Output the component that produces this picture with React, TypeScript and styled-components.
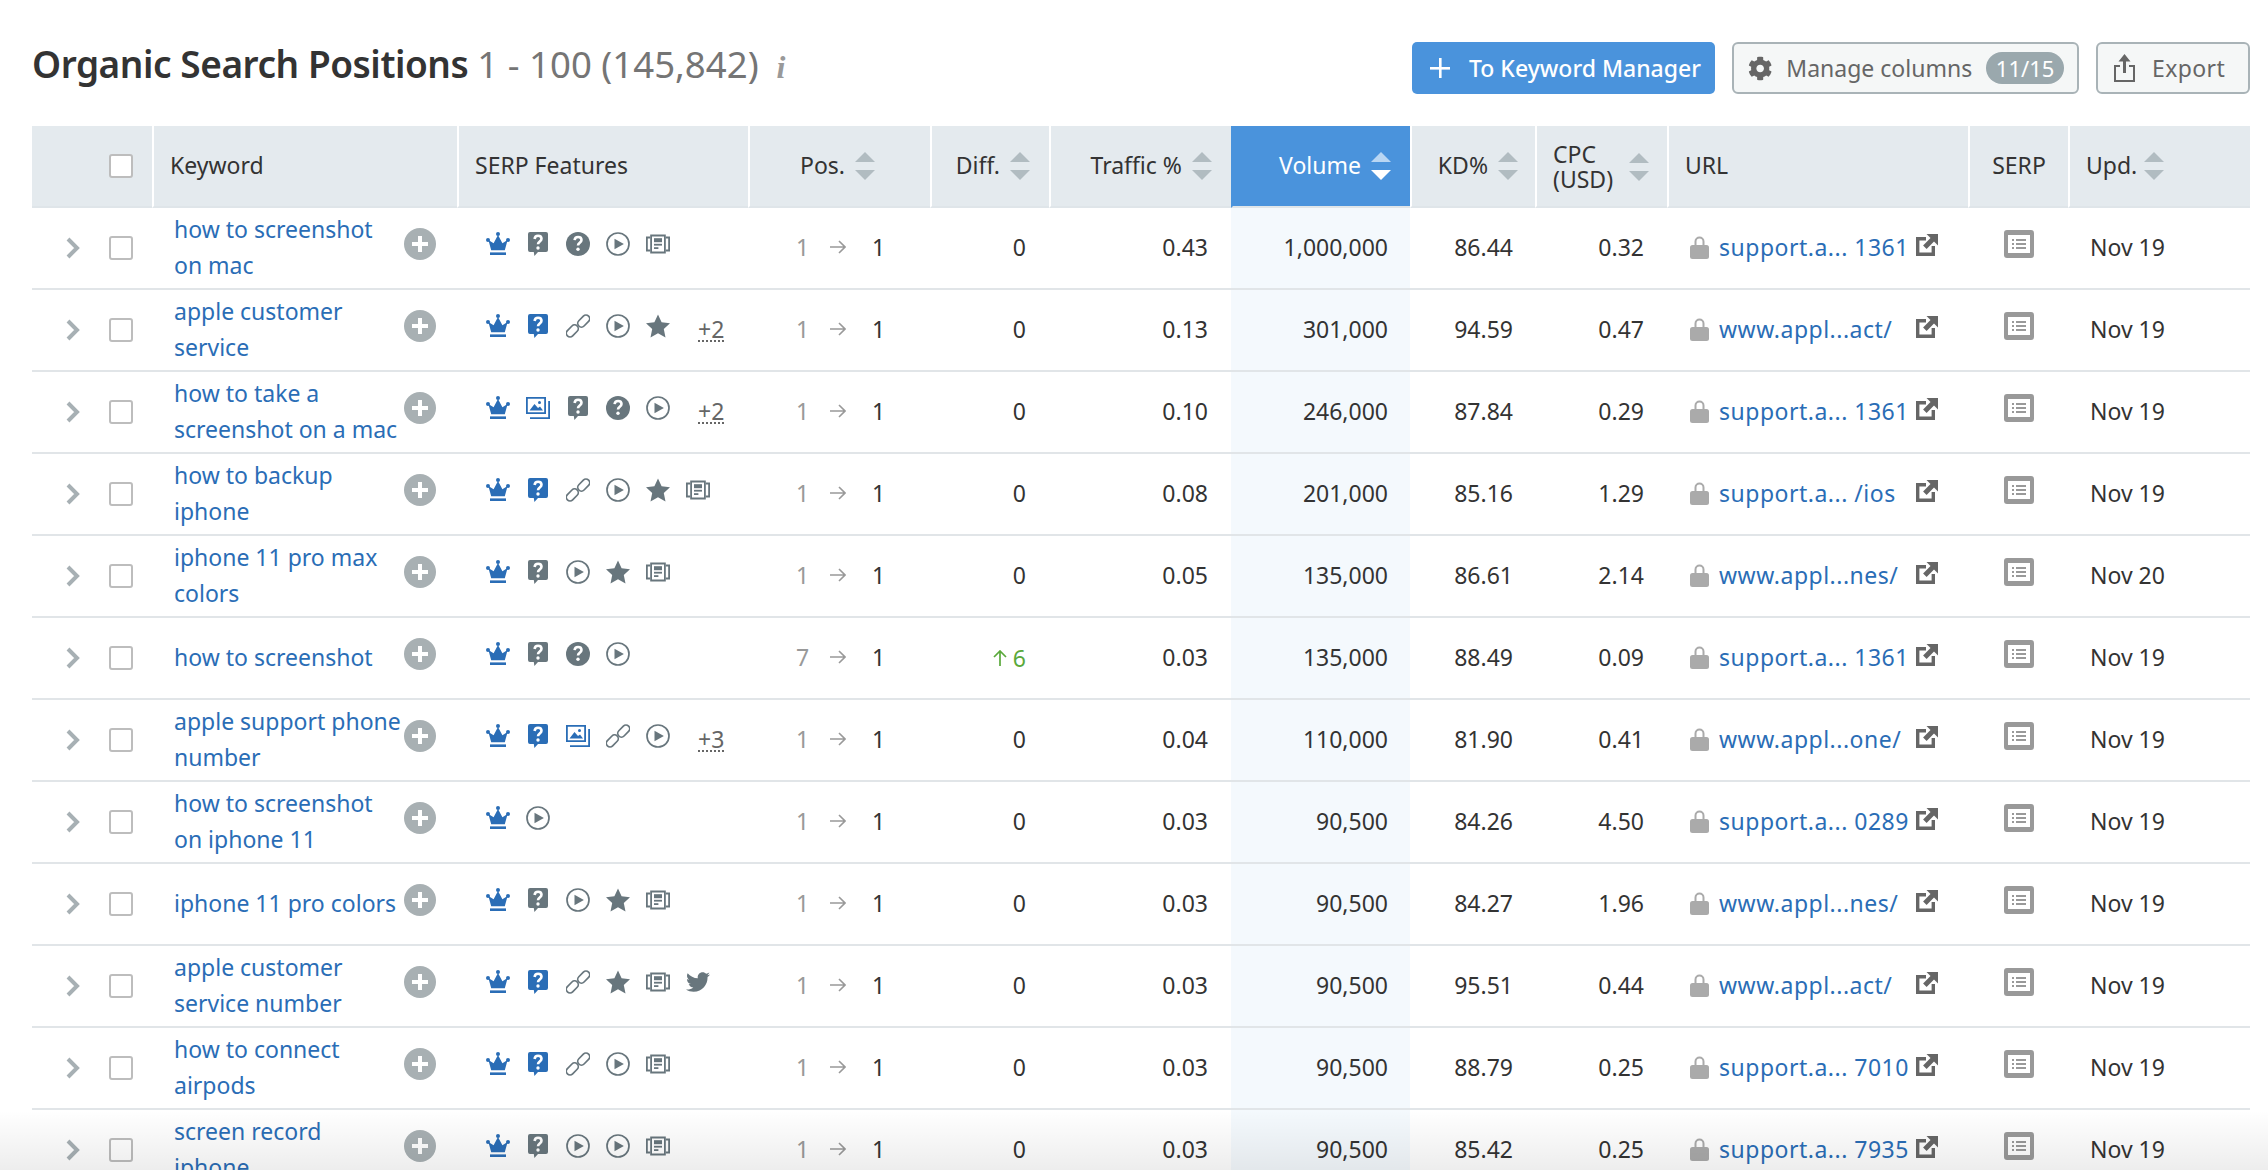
import React from 'react';
import styled, { createGlobalStyle } from 'styled-components';
import { FaCog, FaTwitter } from 'react-icons/fa';

const GlobalStyle = createGlobalStyle`
  html, body {
    margin: 0;
    padding: 0;
    background: #fff;
    overflow: hidden;
  }
`;

type Feature = 'crown' | 'askGray' | 'askBlue' | 'help' | 'play' | 'news' | 'link' | 'star' | 'images' | 'twitter';

interface Row {
  keyword: string;
  features: Feature[];
  more?: number;
  prev?: number;
  diff?: number;
  traffic: string;
  volume: string;
  kd: string;
  cpc: string;
  url: string;
  updated: string;
}

const rows: Row[] = [
  { keyword: 'how to screenshot on mac', features: ['crown', 'askGray', 'help', 'play', 'news'], traffic: '0.43', volume: '1,000,000', kd: '86.44', cpc: '0.32', url: 'support.a... 1361', updated: 'Nov 19' },
  { keyword: 'apple customer service', features: ['crown', 'askBlue', 'link', 'play', 'star'], more: 2, traffic: '0.13', volume: '301,000', kd: '94.59', cpc: '0.47', url: 'www.appl...act/', updated: 'Nov 19' },
  { keyword: 'how to take a screenshot on a mac', features: ['crown', 'images', 'askGray', 'help', 'play'], more: 2, traffic: '0.10', volume: '246,000', kd: '87.84', cpc: '0.29', url: 'support.a... 1361', updated: 'Nov 19' },
  { keyword: 'how to backup iphone', features: ['crown', 'askBlue', 'link', 'play', 'star', 'news'], traffic: '0.08', volume: '201,000', kd: '85.16', cpc: '1.29', url: 'support.a... /ios', updated: 'Nov 19' },
  { keyword: 'iphone 11 pro max colors', features: ['crown', 'askGray', 'play', 'star', 'news'], traffic: '0.05', volume: '135,000', kd: '86.61', cpc: '2.14', url: 'www.appl...nes/', updated: 'Nov 20' },
  { keyword: 'how to screenshot', features: ['crown', 'askGray', 'help', 'play'], prev: 7, diff: 6, traffic: '0.03', volume: '135,000', kd: '88.49', cpc: '0.09', url: 'support.a... 1361', updated: 'Nov 19' },
  { keyword: 'apple support phone number', features: ['crown', 'askBlue', 'images', 'link', 'play'], more: 3, traffic: '0.04', volume: '110,000', kd: '81.90', cpc: '0.41', url: 'www.appl...one/', updated: 'Nov 19' },
  { keyword: 'how to screenshot on iphone 11', features: ['crown', 'play'], traffic: '0.03', volume: '90,500', kd: '84.26', cpc: '4.50', url: 'support.a... 0289', updated: 'Nov 19' },
  { keyword: 'iphone 11 pro colors', features: ['crown', 'askGray', 'play', 'star', 'news'], traffic: '0.03', volume: '90,500', kd: '84.27', cpc: '1.96', url: 'www.appl...nes/', updated: 'Nov 19' },
  { keyword: 'apple customer service number', features: ['crown', 'askBlue', 'link', 'star', 'news', 'twitter'], traffic: '0.03', volume: '90,500', kd: '95.51', cpc: '0.44', url: 'www.appl...act/', updated: 'Nov 19' },
  { keyword: 'how to connect airpods', features: ['crown', 'askBlue', 'link', 'play', 'news'], traffic: '0.03', volume: '90,500', kd: '88.79', cpc: '0.25', url: 'support.a... 7010', updated: 'Nov 19' },
  { keyword: 'screen record iphone', features: ['crown', 'askGray', 'play', 'play', 'news'], traffic: '0.03', volume: '90,500', kd: '85.42', cpc: '0.25', url: 'support.a... 7935', updated: 'Nov 19' },
];

const BLUE = '#2a6db6';
const SLATE = '#68767d';

const QuestionMark = () => (
  <>
    <path d="M8.6 8.2c.2-2 1.6-3.2 3.5-3.2 2 0 3.4 1.2 3.4 3 0 2.6-3.5 2.8-3.5 5.4" fill="none" stroke="#fff" strokeWidth="2.6" />
    <circle cx="12" cy="17.2" r="1.7" fill="#fff" />
  </>
);

const FeatureIcon = ({ type }: { type: Feature }) => {
  switch (type) {
    case 'crown':
      return (
        <svg width="24" height="24" viewBox="0 0 24 24" fill={BLUE}>
          <circle cx="12" cy="2" r="2" />
          <circle cx="2" cy="8" r="2" />
          <circle cx="22" cy="8" r="2" />
          <path d="M12 3l4.4 8.2L21.6 8l-2.8 10.2H5.2L2.4 8l5.2 3.2z" />
          <rect x="4" y="20.4" width="16" height="2.6" />
        </svg>
      );
    case 'askGray':
    case 'askBlue':
      return (
        <svg width="24" height="24" viewBox="0 0 24 24">
          <path
            d="M4 0h16a2 2 0 0 1 2 2v16a2 2 0 0 1-2 2h-8l-3.6 4-.6-4H4a2 2 0 0 1-2-2V2a2 2 0 0 1 2-2z"
            fill={type === 'askBlue' ? BLUE : SLATE}
          />
          <g transform="translate(0 -1.2)">
            <QuestionMark />
          </g>
        </svg>
      );
    case 'help':
      return (
        <svg width="24" height="24" viewBox="0 0 24 24">
          <circle cx="12" cy="12" r="12" fill={SLATE} />
          <QuestionMark />
        </svg>
      );
    case 'play':
      return (
        <svg width="24" height="24" viewBox="0 0 24 24">
          <circle cx="12" cy="12" r="11" fill="none" stroke={SLATE} strokeWidth="1.7" />
          <path d="M8.5 6.8l9.4 5.2-9.4 5.2z" fill={SLATE} />
        </svg>
      );
    case 'news':
      return (
        <svg width="24" height="24" viewBox="0 0 24 24" fill={SLATE}>
          <path d="M4.2 2.6h15.6v18.8H4.2zM6 4.4v15.2h12V4.4z" fillRule="evenodd" />
          <path d="M4.2 4.6H0v14.8h4.2v-1.8H1.8V6.4h2.4zM19.8 4.6H24v14.8h-4.2v-1.8h2.4V6.4h-2.4z" />
          <rect x="8" y="6.2" width="8" height="4" />
          <rect x="8" y="11.8" width="8" height="1.8" />
          <rect x="8" y="15.2" width="4.4" height="1.8" />
        </svg>
      );
    case 'link':
      return (
        <svg width="24" height="24" viewBox="0 0 24 24" fill="none" stroke={SLATE} strokeWidth="1.7">
          <rect x="-0.6" y="13.2" width="13.8" height="7.4" rx="3.7" transform="rotate(-45 6.3 16.9)" />
          <rect x="10.8" y="3.4" width="13.8" height="7.4" rx="3.7" transform="rotate(-45 17.7 7.1)" />
        </svg>
      );
    case 'star':
      return (
        <svg width="24" height="24" viewBox="0 0 24 24" fill={SLATE}>
          <path d="M12 .4l3.6 7.8 8.4 1-6.2 5.8 1.7 8.5-7.5-4.2-7.5 4.2 1.7-8.5L0 9.2l8.4-1z" />
        </svg>
      );
    case 'images':
      return (
        <svg width="24" height="24" viewBox="0 0 24 24" fill={BLUE}>
          <path d="M0 1h20v17H0zM1.8 2.8v13.4h16.4V2.8z" fillRule="evenodd" />
          <path d="M22.2 5H24v18H4v-1.8h18.2z" />
          <circle cx="13.5" cy="6.5" r="1.5" />
          <path d="M3.5 14.5l5-6.5 3.5 4 2-1.6 3 4.1z" />
        </svg>
      );
    default:
      return <FaTwitter size={24} color={SLATE} />;
  }
};

const SortArrows = ({ $active }: { $active?: boolean }) => (
  <SortIcon viewBox="0 0 20 28" $active={$active}>
    <path className="up" d="M10 0l10 10H0z" />
    <path className="down" d="M0 18h20L10 28z" />
  </SortIcon>
);

const SortableHead = ({ label, active, pad }: { label: React.ReactNode; active?: boolean; pad: number }) => (
  <HeadCell $active={active} $pad={pad}>
    <SortLabel>
      {label}
      <SortArrows $active={active} />
    </SortLabel>
  </HeadCell>
);

export default function App() {
  return (
    <Page>
      <GlobalStyle />
      <Toolbar>
        <TitleGroup>
          <Title>Organic Search Positions</Title>
          <Count>1 - 100 (145,842)</Count>
          <InfoMark>i</InfoMark>
        </TitleGroup>
        <Actions>
          <PrimaryButton>
            <svg width="22" height="22" viewBox="0 0 22 22" fill="#fff">
              <rect x="10" y="1" width="2.6" height="20" />
              <rect x="1" y="10" width="20" height="2.6" />
            </svg>
            To Keyword Manager
          </PrimaryButton>
          <OutlineButton $width={347}>
            <FaCog size={25} color="#666" />
            Manage columns
            <Badge>11/15</Badge>
          </OutlineButton>
          <OutlineButton $width={154}>
            <ExportIcon viewBox="0 0 21 28">
              <path d="M10.5 0l6 7.5H12V19H9V7.5H4.5z" />
              <path d="M0 11h6v2H2v13h17V13h-4v-2h6v17H0z" />
            </ExportIcon>
            <ExportText>Export</ExportText>
          </OutlineButton>
        </Actions>
      </Toolbar>

      <Table>
        <colgroup>
          {[120, 305, 291, 182, 119, 182, 179, 125, 132, 301, 100, 182].map((w, i) => (
            <col key={i} width={w} />
          ))}
        </colgroup>
        <thead>
          <tr>
            <SelectHead>
              <CheckBox />
            </SelectHead>
            <TextHead>Keyword</TextHead>
            <TextHead>SERP Features</TextHead>
            <SortableHead label="Pos." pad={55} />
            <SortableHead label="Diff." pad={19} />
            <SortableHead label="Traffic %" pad={19} />
            <SortableHead label="Volume" pad={19} active />
            <SortableHead label="KD%" pad={17} />
            <SortableHead
              pad={18}
              label={
                <TwoLineLabel>
                  CPC
                  <br />
                  (USD)
                </TwoLineLabel>
              }
            />
            <TextHead>URL</TextHead>
            <CenterHead>SERP</CenterHead>
            <TextHead>
              <UpdatedLabel>
                Upd.
                <SortArrows />
              </UpdatedLabel>
            </TextHead>
          </tr>
        </thead>
        <tbody>
          {rows.map((row, i) => (
            <tr key={i}>
              <Cell>
                <SelectBox>
                  <Chevron viewBox="0 0 14 22">
                    <path d="M2 2l9 9-9 9" />
                  </Chevron>
                  <CheckBox />
                </SelectBox>
              </Cell>
              <Cell>
                <KeywordBox>
                  <KeywordLink>{row.keyword}</KeywordLink>
                  <AddButton viewBox="0 0 32 32">
                    <circle cx="16" cy="16" r="16" />
                    <path d="M14 8h4v6h6v4h-6v6h-4v-6H8v-4h6z" />
                  </AddButton>
                </KeywordBox>
              </Cell>
              <Cell>
                <FeatureBox>
                  <FeatureRow>
                    {row.features.map((f, j) => (
                      <FeatureIcon key={j} type={f} />
                    ))}
                  </FeatureRow>
                  {row.more && <MoreLabel>+{row.more}</MoreLabel>}
                </FeatureBox>
              </Cell>
              <Cell>
                <PosBox>
                  <PrevPos>{row.prev ?? 1}</PrevPos>
                  <svg width="16" height="14" viewBox="0 0 16 14" fill="none" stroke="#999" strokeWidth="1.6">
                    <path d="M0 7h15M9 1l6 6-6 6" />
                  </svg>
                  <CurrentPos>1</CurrentPos>
                </PosBox>
              </Cell>
              <NumberCell $pad={23}>
                {row.diff ? (
                  <DiffUp>
                    <svg width="14" height="16" viewBox="0 0 14 16" fill="none" stroke="#5aa93b" strokeWidth="1.7">
                      <path d="M7 16V1M1 7l6-6 6 6" />
                    </svg>
                    {row.diff}
                  </DiffUp>
                ) : (
                  0
                )}
              </NumberCell>
              <NumberCell $pad={23}>{row.traffic}</NumberCell>
              <NumberCell $pad={22} $active>
                {row.volume}
              </NumberCell>
              <NumberCell $pad={22}>{row.kd}</NumberCell>
              <NumberCell $pad={23}>{row.cpc}</NumberCell>
              <Cell>
                <UrlBox>
                  <svg width="19" height="24" viewBox="0 0 19 24" fill="#aaa">
                    <path d="M4.5 11V6.5a5 5 0 0 1 10 0V11h-2V6.5a3 3 0 0 0-6 0V11z" />
                    <rect x="0" y="10" width="19" height="14" rx="2.5" />
                  </svg>
                  <UrlLink>{row.url}</UrlLink>
                  <ExternalIcon viewBox="0 0 22 22">
                    <path d="M0 3h10v3.4H3.4v12.2h12.2V12H19v10H0z" />
                    <path d="M10.5 0H22v11.5l-4-4-7.4 7.4-3.5-3.5L14.5 4z" />
                  </ExternalIcon>
                </UrlBox>
              </Cell>
              <Cell>
                <SerpBox>
                  <svg width="30" height="28" viewBox="0 0 30 28">
                    <rect width="30" height="28" rx="3" fill="#999" />
                    <rect x="4" y="5" width="22" height="18" fill="#fff" />
                    <g fill="#999">
                      <rect x="8" y="9" width="2" height="2" />
                      <rect x="8" y="13" width="2" height="2" />
                      <rect x="8" y="17" width="2" height="2" />
                      <rect x="12" y="9" width="10" height="2" />
                      <rect x="12" y="13" width="10" height="2" />
                      <rect x="12" y="17" width="10" height="2" />
                    </g>
                  </svg>
                </SerpBox>
              </Cell>
              <DateCell>{row.updated}</DateCell>
            </tr>
          ))}
        </tbody>
      </Table>
      <BottomFade />
    </Page>
  );
}

const FONT = `'Noto Sans', 'Open Sans', sans-serif`;

const Page = styled.div`
  position: relative;
  height: 1170px;
  overflow: hidden;
  padding: 42px 18px 0 32px;
  box-sizing: border-box;
  font-family: ${FONT};
  font-size: 23px;
  color: #333;
`;

const Toolbar = styled.div`
  display: flex;
  align-items: flex-start;
  justify-content: space-between;
  height: 52px;
  margin-bottom: 32px;
`;

const TitleGroup = styled.div`
  display: flex;
  align-items: baseline;
  height: 44px;
`;

const Title = styled.h1`
  margin: 0;
  font-size: 37px;
  line-height: 44px;
  font-weight: 600;
  color: #333;
  letter-spacing: -0.45px;
`;

const Count = styled.span`
  margin-left: 9px;
  font-size: 36.6px;
  line-height: 44px;
  color: #757575;
`;

const InfoMark = styled.span`
  margin-left: 18px;
  font-family: 'Liberation Serif', serif;
  font-style: italic;
  font-weight: 700;
  font-size: 32px;
  color: #999;
`;

const Actions = styled.div`
  display: flex;
  gap: 17px;
`;

const PrimaryButton = styled.button`
  display: flex;
  align-items: center;
  gap: 18px;
  width: 303px;
  height: 52px;
  padding: 0 0 0 17px;
  border: 0;
  border-radius: 5px;
  background: #4a93dc;
  color: #fff;
  font: 500 23px ${FONT};
  white-space: nowrap;
`;

const OutlineButton = styled.button<{ $width: number }>`
  display: flex;
  align-items: center;
  gap: 14px;
  width: ${(p) => p.$width}px;
  height: 52px;
  padding: 0 13px 0 14px;
  box-sizing: border-box;
  border: 2px solid #a9b3b7;
  border-radius: 6px;
  background: #f5f7f7;
  color: #666;
  font: 400 23px ${FONT};
  white-space: nowrap;
`;

const ExportIcon = styled.svg`
  flex: none;
  width: 21px;
  height: 28px;
  margin: 0 3px 0 2px;
  fill: #666;
`;

const ExportText = styled.span`
  letter-spacing: 0.4px;
`;

const Badge = styled.span`
  display: flex;
  align-items: center;
  justify-content: center;
  width: 80px;
  height: 32px;
  margin-left: auto;
  border-radius: 16px;
  background: #9aa8ad;
  color: #fff;
  font-size: 22px;
`;

const Table = styled.table`
  width: 2218px;
  table-layout: fixed;
  border-collapse: separate;
  border-spacing: 0;
`;

const HeadBase = styled.th`
  height: 78px;
  padding: 0 0 2px;
  box-sizing: content-box;
  background: #e4eaee;
  border-bottom: 2px solid #dfe5e9;
  font-weight: 400;
  font-size: 23px;
  color: #333;
`;

const SelectHead = styled(HeadBase)`
  padding-left: 77px;
  padding-bottom: 0;
  height: 80px;
  text-align: left;
  line-height: 0;
`;

const TextHead = styled(HeadBase)`
  padding-left: 16px;
  border-left: 2px solid #fff;
  text-align: left;
`;

const CenterHead = styled(HeadBase)`
  border-left: 2px solid #fff;
  text-align: center;
`;

const HeadCell = styled(HeadBase)<{ $active?: boolean; $pad: number }>`
  padding-right: ${(p) => p.$pad}px;
  border-left: 2px solid ${(p) => (p.$active ? '#4a93dc' : '#fff')};
  background: ${(p) => (p.$active ? '#4a93dc' : '#e4eaee')};
  color: ${(p) => (p.$active ? '#fff' : '#333')};
  text-align: right;
`;

const SortLabel = styled.span`
  display: inline-flex;
  align-items: center;
  justify-content: flex-end;
  gap: 10px;
  text-align: left;
  line-height: 25px;
  white-space: nowrap;
`;

const UpdatedLabel = styled(SortLabel)`
  gap: 7px;
`;

const TwoLineLabel = styled.span`
  width: 66px;
`;

const SortIcon = styled.svg<{ $active?: boolean }>`
  flex: none;
  width: 20px;
  height: 28px;

  .up {
    fill: ${(p) => (p.$active ? '#b9d6f3' : '#b1bcc1')};
  }

  .down {
    fill: ${(p) => (p.$active ? '#fff' : '#b1bcc1')};
  }
`;

const Cell = styled.td`
  height: 80px;
  padding: 0;
  border-bottom: 2px solid #e1e5e8;
`;

const NumberCell = styled(Cell)<{ $pad: number; $active?: boolean }>`
  height: 78px;
  padding: 0 ${(p) => p.$pad}px 2px 0;
  background: ${(p) => (p.$active ? '#f4f9fd' : 'transparent')};
  text-align: right;
`;

const DateCell = styled(Cell)`
  height: 78px;
  padding: 0 0 2px 22px;
`;

const SelectBox = styled.div`
  display: flex;
  align-items: center;
  gap: 29px;
  padding-left: 34px;
`;

const Chevron = styled.svg`
  width: 14px;
  height: 22px;
  fill: none;
  stroke: #a7b0b4;
  stroke-width: 4;
`;

const CheckBox = styled.span`
  display: inline-block;
  width: 24px;
  height: 24px;
  box-sizing: border-box;
  border: 2px solid #bdbdbd;
  border-radius: 3px;
  background: #fff;
`;

const KeywordBox = styled.div`
  display: flex;
  align-items: center;
  padding-left: 22px;
`;

const KeywordLink = styled.a`
  flex: none;
  width: 228px;
  margin: 0 2px 2px 0;
  color: ${BLUE};
  line-height: 36px;
`;

const AddButton = styled.svg`
  flex: none;
  width: 32px;
  height: 32px;
  margin-bottom: 8px;

  circle {
    fill: #a8b0b3;
  }

  path {
    fill: #fff;
  }
`;

const FeatureBox = styled.div`
  display: flex;
  align-items: center;
  padding-left: 29px;
`;

const FeatureRow = styled.div`
  display: flex;
  gap: 16px;
  margin-bottom: 8px;
`;

const MoreLabel = styled.span`
  margin-left: 28px;
  border-bottom: 2px dotted #666;
  color: #666;
  line-height: 22px;
`;

const PosBox = styled.div`
  display: flex;
  align-items: center;
  margin-bottom: 2px;
  padding-left: 48px;
`;

const PrevPos = styled.span`
  width: 34px;
  color: #999;
`;

const CurrentPos = styled.span`
  margin-left: 26px;
`;

const DiffUp = styled.span`
  display: inline-flex;
  align-items: center;
  gap: 6px;
  color: #5aa93b;
`;

const UrlBox = styled.div`
  display: flex;
  align-items: center;
  margin-bottom: 2px;
  padding-left: 23px;
`;

const UrlLink = styled.a`
  width: 197px;
  margin-left: 10px;
  color: ${BLUE};
  letter-spacing: 0.5px;
  white-space: nowrap;
`;

const ExternalIcon = styled.svg`
  flex: none;
  width: 22px;
  height: 22px;
  margin-bottom: 4px;
  fill: #666;
`;

const SerpBox = styled.div`
  display: flex;
  justify-content: center;
  margin-bottom: 8px;
  padding-left: 2px;
  line-height: 0;
`;

const BottomFade = styled.div`
  position: absolute;
  left: 0;
  right: 0;
  bottom: 0;
  height: 60px;
  background: linear-gradient(to bottom, rgba(0, 0, 0, 0), rgba(0, 0, 0, 0.07));
  pointer-events: none;
`;
